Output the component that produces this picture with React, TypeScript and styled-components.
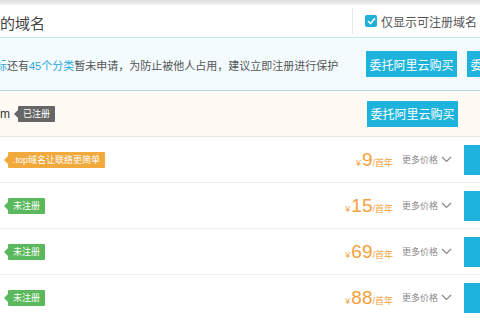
import { FC } from 'react'
import styled, { createGlobalStyle } from 'styled-components'

const GlobalStyle = createGlobalStyle`
  body {
    margin: 0;
    background: #fff;
    font-family: "Liberation Sans", "Noto Sans CJK SC", sans-serif;
  }
`

const Page = styled.div`
  width: 480px;
  height: 320px;
  overflow: hidden;
  background: #fff;
`

const TopShade = styled.div`
  height: 5px;
  background: linear-gradient(#dcdcdc, #f4f4f4);
`

const Header = styled.div`
  display: flex;
  align-items: center;
  height: 32px;
  border-bottom: 1px solid #cce8ef;
`

const HeaderTitle = styled.div`
  flex: 1;
  font-size: 15px;
  color: #444;
  padding-top: 2px;
`

const FilterCell = styled.label`
  display: flex;
  align-items: center;
  gap: 4px;
  width: 115px;
  height: 26px;
  padding-left: 12px;
  border-left: 1px solid #e8e8e8;
  font-size: 12px;
  color: #555;
  white-space: nowrap;
`

const Checkbox = styled.span`
  display: flex;
  align-items: center;
  justify-content: center;
  width: 12px;
  height: 12px;
  border-radius: 2px;
  background: #1fb1d8;
`

const InfoBar = styled.div`
  display: flex;
  align-items: center;
  height: 52px;
  background: #f3fbfe;
  border-bottom: 1px solid #b8dbe4;
`

const InfoText = styled.div`
  flex: 1;
  margin-left: -4px;
  font-size: 11px;
  color: #555;
  white-space: nowrap;
  padding-top: 2px;
`

const Highlight = styled.span`
  color: #29a7da;
`

const ActionButton = styled.button<{ $gap?: number }>`
  flex-shrink: 0;
  width: 91px;
  height: 26px;
  margin-right: ${p => p.$gap ?? 0}px;
  border: none;
  background: #1db3dc;
  color: #fff;
  font-family: inherit;
  font-size: 12px;
  padding: 0;
`

const RegisteredRow = styled.div`
  display: flex;
  align-items: center;
  height: 45px;
  background: #fffaf4;
  border-bottom: 1px solid #ece6de;
`

const DomainRow = styled.div`
  display: flex;
  align-items: center;
  height: 45px;
  border-bottom: 1px solid #eeeeee;
`

const DomainName = styled.div`
  display: flex;
  align-items: center;
  flex: 1;
  gap: 8px;
  font-size: 12px;
  color: #333;
`

const Tag = styled.span<{ $color: string; $offset?: number }>`
  position: relative;
  display: inline-block;
  height: 16px;
  line-height: 16px;
  padding: 0 5px;
  margin-left: ${p => p.$offset ?? 8}px;
  border-radius: 1px;
  background: ${p => p.$color};
  color: #fff;
  font-size: 9px;
  white-space: nowrap;

  &::before {
    content: '';
    position: absolute;
    left: -4px;
    top: 4px;
    border-style: solid;
    border-width: 4px 4px 4px 0;
    border-color: transparent ${p => p.$color} transparent transparent;
  }
`

const Price = styled.div`
  width: 80px;
  text-align: right;
  color: #f4a03c;
  font-size: 9px;
  white-space: nowrap;
`

const PriceNum = styled.span`
  font-size: 19px;
  margin-left: 1px;
`

const MorePrice = styled.div`
  display: flex;
  align-items: center;
  gap: 3px;
  margin-left: 9px;
  width: 51px;
  font-size: 9px;
  color: #888;
  white-space: nowrap;
`

const BuyButton = styled.div`
  flex-shrink: 0;
  width: 60px;
  height: 30px;
  margin-left: 11px;
  margin-right: -44px;
  background: #1db3dc;
`

const Chevron: FC = () => (
  <svg width="11" height="7" viewBox="0 0 11 7">
    <path d="M1 1l4.5 4.5L10 1" fill="none" stroke="#888" strokeWidth="1.2" />
  </svg>
)

const rows = [
  { tag: '.top域名让联络更简单', color: '#f2a93b', price: '9' },
  { tag: '未注册', color: '#5cb85c', price: '15' },
  { tag: '未注册', color: '#5cb85c', price: '69' },
  { tag: '未注册', color: '#5cb85c', price: '88' },
]

const App: FC = () => (
  <Page>
    <GlobalStyle />
    <TopShade />
    <Header>
      <HeaderTitle>的域名</HeaderTitle>
      <FilterCell>
        <Checkbox>
          <svg width="9" height="8" viewBox="0 0 9 8">
            <path d="M1 4l2.5 2.5L8 1.2" fill="none" stroke="#fff" strokeWidth="1.6" />
          </svg>
        </Checkbox>
        仅显示可注册域名
      </FilterCell>
    </Header>
    <InfoBar>
      <InfoText>
        <Highlight>标</Highlight>还有<Highlight>45个分类</Highlight>暂未申请，为防止被他人占用，建议立即注册进行保护
      </InfoText>
      <ActionButton $gap={10}>委托阿里云购买</ActionButton>
      <ActionButton $gap={-78}>委托阿里云购买</ActionButton>
    </InfoBar>
    <RegisteredRow>
      <DomainName>
        m
        <Tag $color="#666" $offset={0}>已注册</Tag>
      </DomainName>
      <ActionButton $gap={22}>委托阿里云购买</ActionButton>
    </RegisteredRow>
    {rows.map((r, i) => (
      <DomainRow key={i}>
        <DomainName>
          <Tag $color={r.color}>{r.tag}</Tag>
        </DomainName>
        <Price>
          ¥<PriceNum>{r.price}</PriceNum>/首年
        </Price>
        <MorePrice>
          更多价格
          <Chevron />
        </MorePrice>
        <BuyButton />
      </DomainRow>
    ))}
  </Page>
)

export default App
